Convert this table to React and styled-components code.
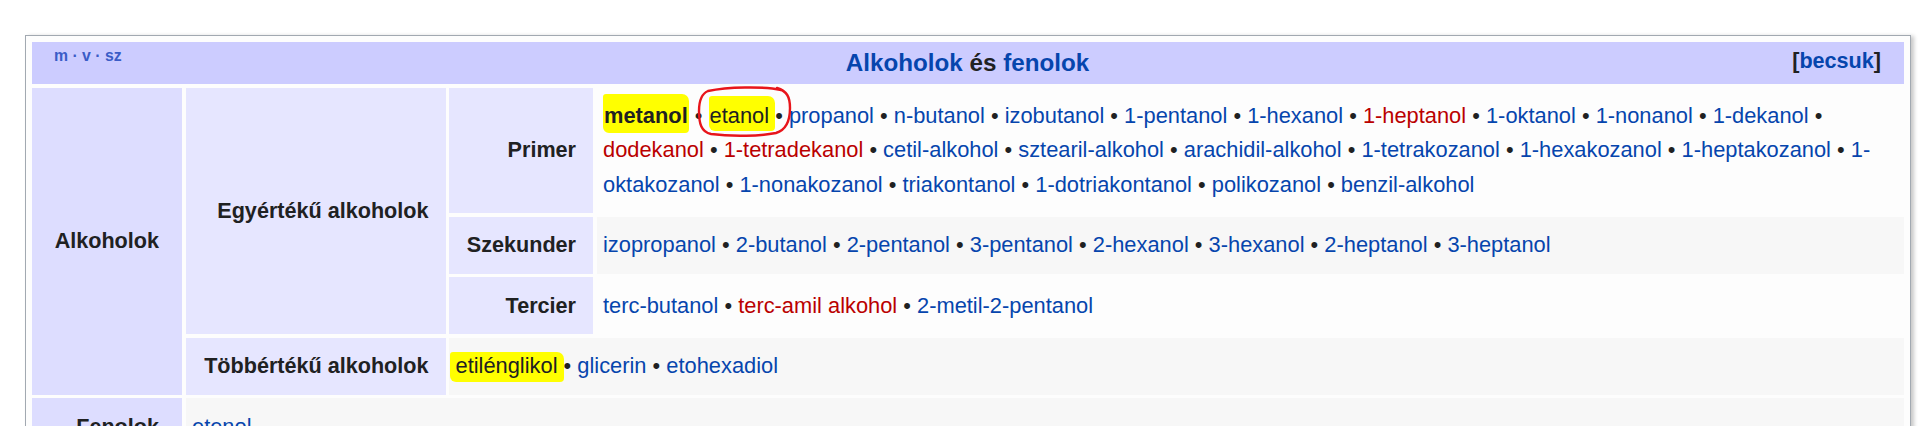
import React from "react";
import styled, { createGlobalStyle } from "styled-components";

const GlobalStyle = createGlobalStyle`
  html, body {
    margin: 0;
    padding: 0;
    background: #ffffff;
    overflow: hidden;
  }
  body {
    font-family: "Liberation Sans", Arial, sans-serif;
    color: #202122;
  }
`

const Page = styled.div`
  padding: 35px 0 0 25px;
`

const Navbox = styled.div`
  width: 1886px;
  box-sizing: border-box;
  border: 1px solid #a2a9b1;
  padding: 6px;
  background: #fdfdfd;
  box-shadow: 3px 1px 4px rgba(0, 0, 0, 0.22);
  font-size: 21.85px;
  line-height: 34.4px;
`

const Header = styled.div`
  display: grid;
  grid-template-columns: 1fr auto 1fr;
  align-items: center;
  height: 42px;
  padding: 0 23px 0 22px;
  background: #ccccff;
`

const Navbar = styled.div`
  align-self: start;
  margin-top: 1px;
  font-size: 15.8px;
  font-weight: bold;
  line-height: 26px;
  color: #3a5cc7;
  white-space: nowrap;
`

const Title = styled.div`
  font-size: 24.2px;
  line-height: 42px;
  font-weight: bold;
  white-space: nowrap;
`

const Collapse = styled.div`
  justify-self: end;
  font-size: 21.6px;
  font-weight: bold;
  line-height: 38px;
  align-self: start;
`

const Body = styled.div`
  display: grid;
  grid-template-columns: 150px 260px 144px 1fr;
  gap: 3.5px;
  margin-top: 3.5px;
`

const Group = styled.div`
  grid-column: ${p => p.$col};
  grid-row: ${p => p.$row};
  display: flex;
  align-items: center;
  justify-content: flex-end;
  padding: 0 ${p => p.$right || 17}px 0 12px;
  background: ${p => (p.$outer ? "#ddddff" : "#e6e6ff")};
  font-size: 21.6px;
  font-weight: bold;
  white-space: nowrap;
`

const List = styled.div`
  grid-column: ${p => p.$col};
  grid-row: ${p => p.$row};
  padding: 11.3px 6px 11.3px 6.5px;
  background: ${p => (p.$even ? "#f7f7f7" : "#fdfdfd")};
`

const Link = styled.a`
  color: ${p => (p.$red ? "#ba0000" : "#0645ad")};
  text-decoration: none;
`

const Mark = styled.span`
  background: #ffff00;
  padding: ${p => p.$pad};
  margin-left: ${p => p.$shift || 0};
  border-radius: 3px 7px 4px 6px;
  color: #202122;
`

const Circled = styled.span`
  position: relative;
`

const Scribble = styled.svg`
  position: absolute;
  left: -12px;
  top: -17px;
  overflow: visible;
  pointer-events: none;
`

const Bullet = styled.span`
  color: #202122;
`

const RedRing = () => (
  <Scribble width="96" height="52" viewBox="0 0 96 52">
    <path
      d="M 84 4 C 66 0, 30 1, 11 5 C 4 8, 2 15, 2 25 C 2 37, 4 46, 14 48 C 36 51, 64 50, 79 47 C 89 44, 93 36, 93 22 C 93 11, 90 5, 80 2"
      fill="none"
      stroke="#e8151b"
      strokeWidth="2.4"
      strokeLinecap="round"
    />
  </Scribble>
)

const primer = [
  { t: "metanol", kind: "self", mark: "9px 1px 5px" },
  { t: "etanol", kind: "plain", mark: "7px 0 3px 1px", markSpace: true, circled: true },
  { t: "propanol" },
  { t: "n-butanol" },
  { t: "izobutanol" },
  { t: "1-pentanol" },
  { t: "1-hexanol" },
  { t: "1-heptanol", red: true },
  { t: "1-oktanol" },
  { t: "1-nonanol" },
  { t: "1-dekanol" },
  { t: "dodekanol", red: true },
  { t: "1-tetradekanol", red: true },
  { t: "cetil-alkohol" },
  { t: "sztearil-alkohol" },
  { t: "arachidil-alkohol" },
  { t: "1-tetrakozanol" },
  { t: "1-hexakozanol" },
  { t: "1-heptakozanol" },
  { t: "1-oktakozanol" },
  { t: "1-nonakozanol" },
  { t: "triakontanol" },
  { t: "1-dotriakontanol" },
  { t: "polikozanol" },
  { t: "benzil-alkohol" },
]

const szekunder = [
  "izopropanol", "2-butanol", "2-pentanol", "3-pentanol",
  "2-hexanol", "3-hexanol", "2-heptanol", "3-heptanol",
].map(t => ({ t }))

const tercier = [
  { t: "terc-butanol" },
  { t: "terc-amil alkohol", red: true },
  { t: "2-metil-2-pentanol" },
]

const tobbertek = [
  { t: "etilénglikol", kind: "plain", mark: "1px 0 4px 6px", markSpace: true, shift: "-6px" },
  { t: "glicerin" },
  { t: "etohexadiol" },
]

const fenolok = [{ t: "etenol" }]

const Entry = ({ item, last }) => {
  const nb = last ? "" : "\u00a0"
  let body
  if (item.kind === "self") body = <b>{item.t}</b>
  else if (item.kind === "plain") body = item.t
  else body = <Link href="#" $red={item.red}>{item.t}</Link>

  if (item.mark) {
    body = (
      <Mark $pad={item.mark} $shift={item.shift}>
        {body}
        {item.markSpace ? nb : ""}
      </Mark>
    )
  }
  if (item.circled) {
    body = (
      <Circled>
        {body}
        <RedRing />
      </Circled>
    )
  }
  return (
    <>
      {body}
      {item.markSpace ? "" : nb}
      {!last && <Bullet>•</Bullet>}
      {!last && " "}
    </>
  )
}

const Items = ({ items }) =>
  items.map((item, i) => <Entry key={item.t} item={item} last={i === items.length - 1} />)

const App = () => {
  return (
    <Page>
      <GlobalStyle />
      <Navbox>
        <Header>
          <Navbar>m · v · sz</Navbar>
          <Title>
            <Link href="#">Alkoholok</Link> és <Link href="#">fenolok</Link>
          </Title>
          <Collapse>
            [<Link href="#">becsuk</Link>]
          </Collapse>
        </Header>
        <Body>
          <Group $col="1" $row="1 / 5" $outer $right={23}>Alkoholok</Group>
          <Group $col="2" $row="1 / 4">Egyértékű alkoholok</Group>

          <Group $col="3" $row="1">Primer</Group>
          <List $col="4" $row="1"><Items items={primer} /></List>

          <Group $col="3" $row="2">Szekunder</Group>
          <List $col="4" $row="2" $even><Items items={szekunder} /></List>

          <Group $col="3" $row="3">Tercier</Group>
          <List $col="4" $row="3"><Items items={tercier} /></List>

          <Group $col="2" $row="4">Többértékű alkoholok</Group>
          <List $col="3 / 5" $row="4" $even><Items items={tobbertek} /></List>

          <Group $col="1" $row="5" $outer $right={23}>Fenolok</Group>
          <List $col="2 / 5" $row="5" $even><Items items={fenolok} /></List>
        </Body>
      </Navbox>
    </Page>
  );
}

export default App;
